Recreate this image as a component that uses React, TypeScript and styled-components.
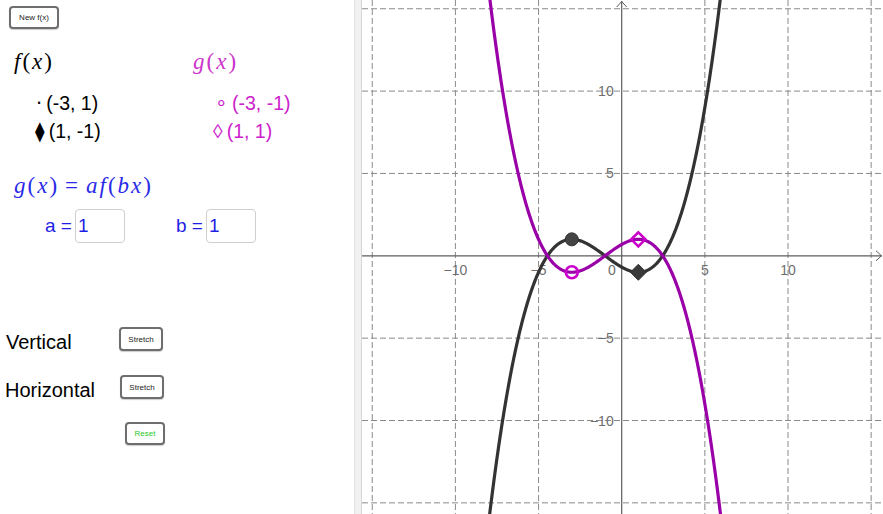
import React from "react";
import styled, { createGlobalStyle } from "styled-components";

const GlobalStyle = createGlobalStyle`
  html, body { margin: 0; padding: 0; background: #fff; }
  body { font-family: "Liberation Sans", Arial, sans-serif; overflow: hidden; }
`;

const Root = styled.div`
  display: flex;
  width: 883px;
  height: 514px;
  overflow: hidden;
`;

const LeftPanel = styled.div`
  width: 354px;
  flex: none;
  display: flex;
  flex-direction: column;
  padding-top: 6px;
  box-sizing: border-box;
`;

const Divider = styled.div`
  width: 6px;
  flex: none;
  background: #f1f1f1;
  border-left: 1px solid #e2e2e2;
  border-right: 1px solid #d6d6d6;
`;

const GraphPanel = styled.div`
  flex: 1;
  position: relative;
  overflow: hidden;
`;

const AppButton = styled.button<{ $w: number; $h: number; $color?: string; $ml: number }>`
  width: ${(p) => p.$w}px;
  height: ${(p) => p.$h}px;
  margin-left: ${(p) => p.$ml}px;
  padding: 0;
  background: #fff;
  border: 2px solid #6e6e6e;
  border-radius: 4px;
  box-shadow: 0 1px 1px rgba(0, 0, 0, 0.2);
  font-family: "Liberation Sans", Arial, sans-serif;
  font-size: 8px;
  color: ${(p) => p.$color || "#222"};
  flex: none;
  box-sizing: border-box;
`;

const FunctionsGrid = styled.div`
  display: grid;
  grid-template-columns: 179px 1fr;
  grid-template-rows: 41px 28px 28px;
  margin-top: 19px;
  padding-left: 14px;
`;

const MathText = styled.div<{ $color: string }>`
  font-family: "Liberation Serif", "DejaVu Serif", serif;
  font-style: italic;
  font-size: 23px;
  line-height: 28px;
  letter-spacing: 2px;
  color: ${(p) => p.$color};
  white-space: nowrap;
  align-self: start;
`;

const Up = styled.span`
  font-style: normal;
`;

const Eq = styled.span`
  font-style: normal;
  margin: 0 6px;
`;

const PointText = styled.div<{ $color: string; $indent: number }>`
  font-size: 19.5px;
  line-height: 28px;
  color: ${(p) => p.$color};
  padding-left: ${(p) => p.$indent}px;
  white-space: nowrap;
`;

const Sym = styled.span<{ $font?: string }>`
  font-family: ${(p) => p.$font || '"DejaVu Sans", sans-serif'};
  display: inline-block;
  margin-right: 4px;
`;

const Formula = styled(MathText)`
  margin-top: 27px;
  padding-left: 14px;
`;

const InputsRow = styled.div`
  display: flex;
  align-items: center;
  margin-top: 9px;
  padding-left: 45px;
  gap: 51px;
`;

const InputGroup = styled.div`
  display: flex;
  align-items: center;
  gap: 3px;
  color: #1f1fe6;
  font-size: 19px;
`;

const NumBox = styled.div`
  width: 50px;
  height: 34px;
  box-sizing: border-box;
  border: 1px solid #cfcfcf;
  border-radius: 4px;
  padding-left: 2px;
  line-height: 32px;
  font-size: 19px;
  color: #1f1fe6;
`;

const StretchRows = styled.div`
  display: flex;
  flex-direction: column;
  gap: 24px;
  margin-top: 83px;
`;

const StretchRow = styled.div<{ $labelW: number }>`
  display: grid;
  grid-template-columns: ${(p) => p.$labelW}px auto;
  align-items: center;
  height: 24px;
`;

const RowLabel = styled.div<{ $pl: number }>`
  font-size: 20px;
  line-height: 20px;
  color: #000;
  margin-top: 6px;
  padding-left: ${(p) => p.$pl}px;
  white-space: nowrap;
`;

const ResetRow = styled.div`
  display: flex;
`;

// ---------- graph ----------
const OX = 259.7;
const OY = 255.8;
const SX = 16.63;
const SY = 16.47;
const px = (x: number) => OX + x * SX;
const py = (y: number) => OY - y * SY;

const f = (x: number) => (x * x * x + 3 * x * x - 9 * x - 11) / 16;
const g = (x: number) => -f(x);

function curve(fn: (x: number) => number) {
  const pts: string[] = [];
  for (let x = -9; x <= 7.0001; x += 0.04) {
    pts.push(`${px(x).toFixed(2)},${py(fn(x)).toFixed(2)}`);
  }
  return "M" + pts.join("L");
}

const GRID = [-15, -10, -5, 5, 10, 15];

function Graph() {
  const W = 521;
  const H = 514;
  const gridColor = "#8a8a8a";
  const axisColor = "#5e5e5e";
  const labelColor = "#6e6e6e";
  const diamond = (cx: number, cy: number, r: number) =>
    `M${cx},${cy - r}L${cx + r},${cy}L${cx},${cy + r}L${cx - r},${cy}Z`;
  return (
    <svg width={W} height={H} viewBox={`0 0 ${W} ${H}`} style={{ display: "block" }}>
      {GRID.map((v) => (
        <line key={"gx" + v} x1={px(v)} x2={px(v)} y1={0} y2={H} stroke={gridColor} strokeWidth={1} strokeDasharray="6,3" />
      ))}
      {GRID.map((v) => (
        <line key={"gy" + v} x1={0} x2={W} y1={py(v)} y2={py(v)} stroke={gridColor} strokeWidth={1} strokeDasharray="6,3" />
      ))}
      <line x1={0} x2={W - 1} y1={OY} y2={OY} stroke={axisColor} strokeWidth={1.2} />
      <line x1={OX} x2={OX} y1={1} y2={H} stroke={axisColor} strokeWidth={1.2} />
      <path d={`M${W - 7},${OY - 5}L${W - 1.5},${OY}L${W - 7},${OY + 5}`} fill="none" stroke={axisColor} strokeWidth={1} />
      <path d={`M${OX - 5},${7}L${OX},${1.5}L${OX + 5},${7}`} fill="none" stroke={axisColor} strokeWidth={1} />
      <g fontFamily="'Liberation Sans', Arial, sans-serif" fontSize={14} fill={labelColor}>
        {[-10, -5, 5, 10].map((v) => (
          <text key={"lx" + v} x={px(v)} y={OY + 19} textAnchor="middle">
            {v < 0 ? `\u2212${-v}` : v}
          </text>
        ))}
        <text x={OX - 6} y={OY + 19} textAnchor="end">0</text>
        {[-10, -5, 5, 10].map((v) => (
          <text key={"ly" + v} x={OX - 8} y={py(v) + 5} textAnchor="end">
            {v < 0 ? `\u2212${-v}` : v}
          </text>
        ))}
      </g>
      <path d={curve(f)} fill="none" stroke="#333" strokeWidth={3.2} strokeLinejoin="round" />
      <path d={curve(g)} fill="none" stroke="#9a00a8" strokeWidth={3.2} strokeLinejoin="round" />
      <circle cx={px(-3)} cy={py(1)} r={6.5} fill="#444" stroke="#333" strokeWidth={1} />
      <path d={diamond(px(1), py(-1), 8)} fill="#3a3a3a" stroke="#333" strokeWidth={1} />
      <circle cx={px(-3)} cy={py(-1)} r={6} fill="none" stroke="#cc00cc" strokeWidth={2.6} />
      <path d={diamond(px(1), py(1), 7)} fill="none" stroke="#cc00cc" strokeWidth={2.6} />
    </svg>
  );
}

export default function App() {
  return (
    <>
      <GlobalStyle />
      <Root>
        <LeftPanel>
          <AppButton $w={50} $h={23} $ml={9}>New f(x)</AppButton>
          <FunctionsGrid>
            <MathText $color="#000">
              f<Up>(</Up>x<Up>)</Up>
            </MathText>
            <MathText $color="#cc33cc">
              g<Up>(</Up>x<Up>)</Up>
            </MathText>
            <PointText $color="#000" $indent={22}>
              <Sym>·</Sym>(-3, 1)
            </PointText>
            <PointText $color="#cc22cc" $indent={22}>
              <Sym $font='"Liberation Sans", sans-serif'>∘</Sym>(-3, -1)
            </PointText>
            <PointText $color="#000" $indent={21}>
              <Sym>⧫</Sym>(1, -1)
            </PointText>
            <PointText $color="#cc22cc" $indent={20}>
              <Sym $font='"Liberation Sans", sans-serif'>◊</Sym>(1, 1)
            </PointText>
          </FunctionsGrid>
          <Formula $color="#2a2ae6">
            g<Up>(</Up>x<Up>)</Up>
            <Eq>=</Eq>af<Up>(</Up>bx<Up>)</Up>
          </Formula>
          <InputsRow>
            <InputGroup>
              <span>a =</span>
              <NumBox>1</NumBox>
            </InputGroup>
            <InputGroup>
              <span>b =</span>
              <NumBox>1</NumBox>
            </InputGroup>
          </InputsRow>
          <StretchRows>
            <StretchRow $labelW={119}>
              <RowLabel $pl={6}>Vertical</RowLabel>
              <AppButton $w={44} $h={24} $ml={0}>Stretch</AppButton>
            </StretchRow>
            <StretchRow $labelW={120}>
              <RowLabel $pl={5}>Horizontal</RowLabel>
              <AppButton $w={44} $h={24} $ml={0}>Stretch</AppButton>
            </StretchRow>
            <ResetRow>
              <AppButton $w={40} $h={23} $ml={125} $color="#1fc81f">Reset</AppButton>
            </ResetRow>
          </StretchRows>
        </LeftPanel>
        <Divider />
        <GraphPanel>
          <Graph />
        </GraphPanel>
      </Root>
    </>
  );
}
